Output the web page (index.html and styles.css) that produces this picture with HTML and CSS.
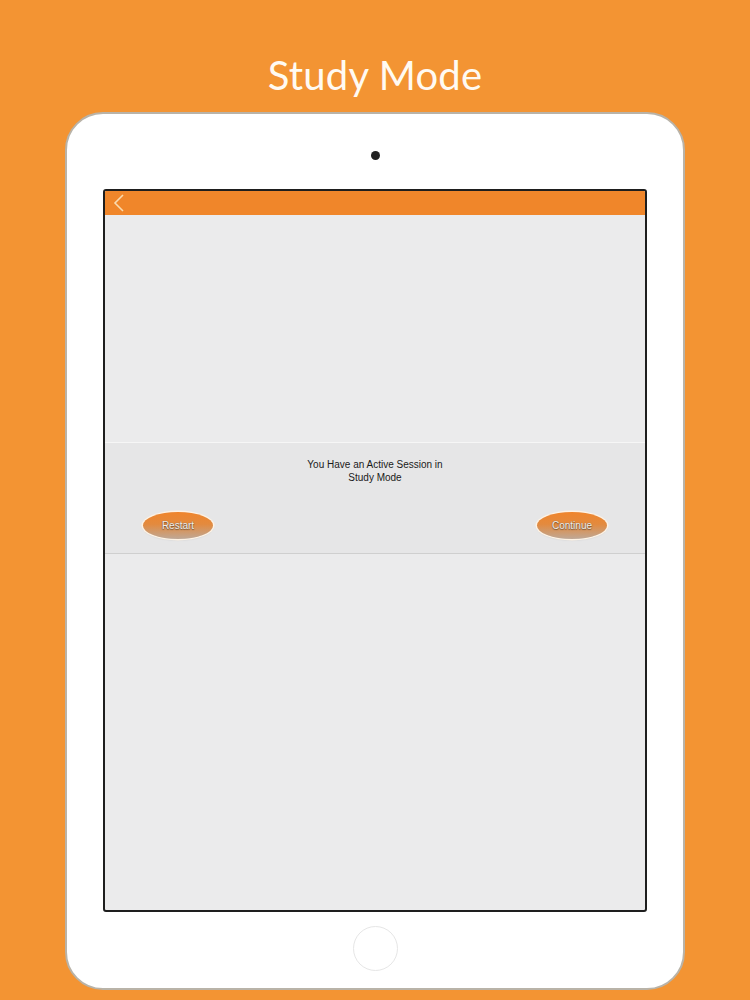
FILE: index.html
```html
<!DOCTYPE html>
<html>
<head>
<meta charset="utf-8">
<link rel="stylesheet" href="styles.css">
</head>
<body>
<div class="page">
  <h1 class="title">Study Mode</h1>
  <div class="device">
    <div class="camera"></div>
    <div class="screen">
      <div class="navbar">
        <svg class="back" width="12" height="20" viewBox="0 0 12 20"><path d="M10 2 L2 10 L10 18" fill="none" stroke="#f9dbb0" stroke-width="1.6"/></svg>
      </div>
      <div class="content">
        <div class="spacer-top"></div>
        <div class="band">
          <p class="msg">You Have an Active Session in<br>Study Mode</p>
          <div class="buttons">
            <div class="btn">Restart</div>
            <div class="btn">Continue</div>
          </div>
        </div>
      </div>
    </div>
    <div class="home"></div>
  </div>
</div>
</body>
</html>
```
FILE: styles.css
```css
html, body {
  margin: 0;
  padding: 0;
}
body {
  background: #f39433;
  width: 750px;
  height: 1000px;
  overflow: hidden;
}
.page {
  display: flex;
  flex-direction: column;
  align-items: center;
}
.title {
  margin: 52px 0 0 0;
  height: 60px;
  font-family: "Lato", "Open Sans", sans-serif;
  font-weight: 400;
  font-size: 40px;
  line-height: 46px;
  color: #fffaf2;
  letter-spacing: 0.2px;
}
.device {
  box-sizing: border-box;
  width: 620px;
  height: 878px;
  margin-top: 0;
  background: #fff;
  border: 2px solid #b9b3a8;
  border-radius: 38px;
  display: flex;
  flex-direction: column;
  align-items: center;
}
.camera {
  width: 9px;
  height: 9px;
  border-radius: 50%;
  background: #222;
  margin-top: 37px;
}
.screen {
  box-sizing: border-box;
  margin-top: 29px;
  width: 544px;
  height: 723px;
  border: 2px solid #1e1e1e;
  border-radius: 3px;
  background: #ebebec;
  display: flex;
  flex-direction: column;
  overflow: hidden;
}
.navbar {
  height: 24px;
  background: #f0862a;
  display: flex;
  align-items: center;
  padding-left: 8px;
  flex-shrink: 0;
}
.content {
  flex: 1;
  display: flex;
  flex-direction: column;
}
.spacer-top {
  height: 227px;
}
.band {
  height: 110px;
  background: #e6e6e7;
  border-top: 1px solid #f6f6f6;
  border-bottom: 1px solid #cfcfcf;
  display: flex;
  flex-direction: column;
}
.msg {
  margin: 15px 0 0 0;
  text-align: center;
  font-family: "Liberation Sans", Arial, sans-serif;
  font-size: 10px;
  line-height: 13px;
  color: #1a1a1a;
}
.buttons {
  display: flex;
  justify-content: space-between;
  padding: 0 38px 0 38px;
  margin-top: 28px;
}
.btn {
  width: 70px;
  height: 27px;
  border-radius: 50%;
  background: linear-gradient(to bottom, #f0852c 0%, #e38a3e 45%, #bfa896 100%);
  box-shadow: 0 0 0 1.5px #fff3e4, 0 1px 2px rgba(0,0,0,0.15);
  display: flex;
  align-items: center;
  justify-content: center;
  font-family: "Liberation Sans", Arial, sans-serif;
  font-size: 10px;
  color: #f3eee8;
  text-shadow: 0 0 1px #6e5a48, 0 1px 1px rgba(60,40,20,0.6);
}
.home {
  box-sizing: border-box;
  width: 45px;
  height: 45px;
  border-radius: 50%;
  border: 1.5px solid #e6e6e6;
  margin-top: 14px;
}
```
